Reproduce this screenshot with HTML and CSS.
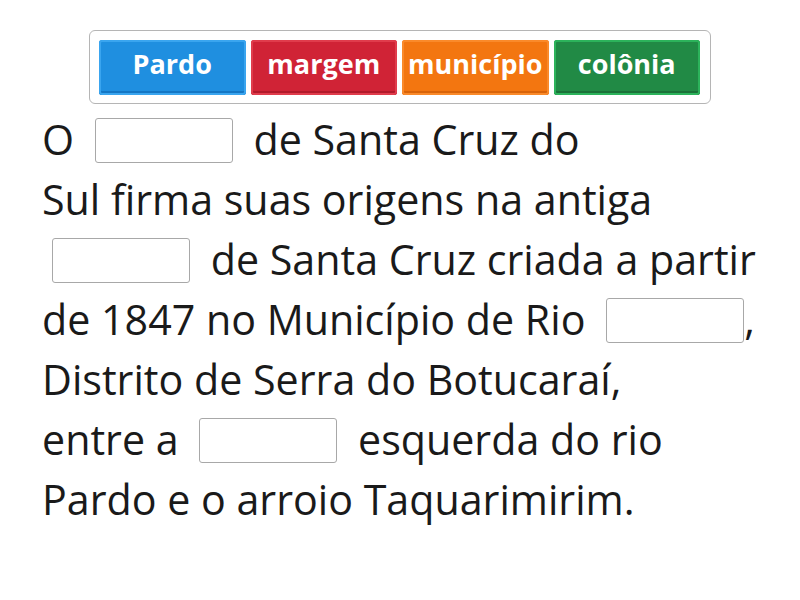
FILE: index.html
```html
<!DOCTYPE html>
<html lang="pt">
<head>
<meta charset="utf-8">
<link rel="stylesheet" href="styles.css">
</head>
<body>
<div class="page">
  <div class="bank">
    <div class="tile blue">Pardo</div>
    <div class="tile red">margem</div>
    <div class="tile orange">município</div>
    <div class="tile green">colônia</div>
  </div>
  <div class="text">
    <div class="line">O <span class="blank"></span> de Santa Cruz do</div>
    <div class="line">Sul firma suas origens na antiga</div>
    <div class="line"><span class="blank"></span> de Santa Cruz criada a partir</div>
    <div class="line">de 1847 no Município de Rio <span class="blank tight"></span>,</div>
    <div class="line">Distrito de Serra do Botucaraí,</div>
    <div class="line">entre a <span class="blank"></span> esquerda do rio</div>
    <div class="line">Pardo e o arroio Taquarimirim.</div>
  </div>
</div>
</body>
</html>
```
FILE: styles.css
```css
html, body {
  margin: 0;
  padding: 0;
  background: #fff;
}
.page {
  width: 800px;
  height: 600px;
  font-family: "Open Sans", sans-serif;
  color: #1a1a1a;
}
.bank {
  margin: 30px 0 0 89px;
  width: 601px;
  padding: 9px 10px 8px 9px;
  border: 1px solid #b5b5b5;
  border-radius: 6px;
  display: flex;
  gap: 5px;
}
.tile {
  width: 147px;
  height: 55px;
  box-sizing: border-box;
  border-radius: 3px;
  color: #fff;
  font-weight: 700;
  font-size: 27px;
  display: flex;
  align-items: center;
  justify-content: center;
  padding-bottom: 8px;
}
.blue {
  background: #1f8fe0;
  box-shadow: inset 0 0 0 2px #3aa5ef, inset 0 -4px 0 #1577c4;
}
.red {
  background: #d02336;
  box-shadow: inset 0 0 0 2px #e03c4c, inset 0 -4px 0 #b21a2b;
}
.orange {
  background: #f37610;
  box-shadow: inset 0 0 0 2px #fa8a2a, inset 0 -4px 0 #d8640a;
}
.green {
  background: #218a45;
  box-shadow: inset 0 0 0 2px #2cb35b, inset 0 -4px 0 #1b7239;
}
.text {
  margin-top: 5px;
  padding-left: 42px;
  font-size: 41.2px;
  line-height: 60px;
}
.line {
  height: 60px;
  white-space: nowrap;
}
.blank {
  display: inline-block;
  width: 136px;
  height: 43px;
  border: 1px solid #a8a8a8;
  border-radius: 3px;
  vertical-align: middle;
  margin: 0 10px;
  position: relative;
  top: -3px;
}
.blank.tight {
  margin-right: 0;
}
```
